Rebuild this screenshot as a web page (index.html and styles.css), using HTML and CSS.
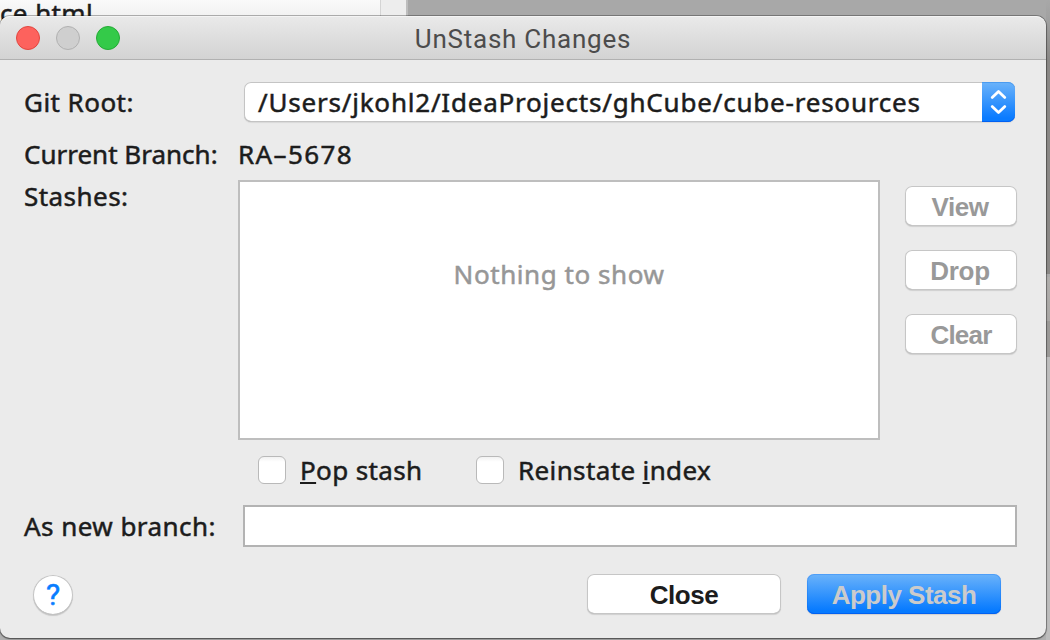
FILE: index.html
```html
<!DOCTYPE html>
<html lang="en">
<head>
<meta charset="utf-8">
<title>UnStash Changes</title>
<link rel="stylesheet" href="styles.css">
</head>
<body>
<div class="backdrop">
  <div class="editor-tab"><span class="file-name">ce.html</span></div>
  <div class="editor-gutter"></div>
  <div class="desktop"></div>
  <div class="side-strip"></div>
</div>
<main class="dialog">
  <header class="titlebar">
    <div class="lights"><i class="light red"></i><i class="light gray"></i><i class="light green"></i></div>
    <h1 class="title">UnStash Changes</h1>
  </header>
  <section class="content">
    <div class="row root-row">
      <label class="label">Git Root:</label>
      <div class="combo">
        <span class="combo-text">/Users/jkohl2/IdeaProjects/ghCube/cube-resources</span>
        <span class="combo-button">
          <svg width="33" height="40" viewBox="0 0 33 40" fill="none" stroke="#fff" stroke-width="2.8" stroke-linecap="round" stroke-linejoin="round"><path d="M10.2 15.4 16.5 9.4l6.3 6M10.2 24.6l6.3 6 6.3-6"/></svg>
        </span>
      </div>
    </div>
    <div class="row branch-row">
      <span class="label current">Current Branch:</span>
      <span class="branch">RA–5678</span>
    </div>
    <div class="row stash-row">
      <span class="label stashes">Stashes:</span>
      <div class="stash-list">Nothing to show</div>
      <div class="actions">
        <button class="button disabled view">View</button>
        <button class="button disabled drop">Drop</button>
        <button class="button disabled clear">Clear</button>
      </div>
    </div>
    <div class="row check-row">
      <label class="check pop"><span class="box"></span><span><u>P</u>op stash</span></label>
      <label class="check"><span class="box"></span><span>Reinstate <u>i</u>ndex</span></label>
    </div>
    <div class="row new-row">
      <label class="label">As new branch:</label>
      <div class="field"></div>
    </div>
    <footer class="row footer">
      <button class="help">?</button>
      <button class="button wide close">Close</button>
      <button class="button wide primary">Apply Stash</button>
    </footer>
  </section>
</main>
</body>
</html>
```
FILE: styles.css
```css
* { box-sizing: border-box; }
body {
  margin: 0;
  width: 1050px;
  height: 640px;
  overflow: hidden;
  position: relative;
  background: #a9a9a9;
  color: #1c1c1c;
  font: 26px/34px "Noto Sans", sans-serif;
  white-space: nowrap;
}
.backdrop {
  position: absolute;
  inset: 0;
  display: flex;
  background: #b0b0b0;
}
.editor-tab {
  width: 380px;
  height: 40px;
  background: linear-gradient(#fafafa, #f2f2f2 16px);
}
.file-name { display: block; margin-top: -4px; letter-spacing: 0.35px; -webkit-text-stroke: 0.5px; }
.editor-gutter {
  width: 28px;
  height: 40px;
  background: #ededed;
  border-left: 1px solid #d4d4d4;
  border-right: 2px solid #bdbdbd;
}
.desktop { flex: 1; height: 40px; background: #a8a8a8; }
.side-strip {
  width: 4px;
  background: linear-gradient(#a8a8a8 0, #a0a0a0 20px, #8a8886 60px, #8a8886 274px, #aaa 274px, #aaa 277px, #b0aeac 277px, #a9a7a5 321px, #9b9997 321px, #9b9997 357px, #bdbdbd 357px);
}
.dialog {
  position: relative;
  margin-top: 16px;
  width: 1046px;
  height: 622px;
  border-radius: 10px;
  background: #ebebeb;
  box-shadow: 0 0 0 1px rgba(0, 0, 0, 0.28), 0 1px 2px rgba(0, 0, 0, 0.4);
}
.titlebar {
  height: 44px;
  display: grid;
  grid-template-columns: 130px 1fr 130px;
  align-items: center;
  border-radius: 10px 10px 0 0;
  border-top: 1px solid #f4f4f4;
  border-bottom: 1px solid #b1b1b1;
  background: linear-gradient(#e9e9e9, #d3d3d3);
}
.lights { display: flex; gap: 16px; padding-left: 16px; }
.light { width: 24px; height: 24px; border-radius: 50%; border: 1px solid; }
.red { background: #fd625d; border-color: #e2463f; }
.gray { background: #cfcfcf; border-color: #b1b1b1; }
.green { background: #34ca49; border-color: #24ab35; }
.title {
  margin: 1px 0 0;
  text-align: center;
  font: 26px/34px Roboto, sans-serif;
  letter-spacing: 0.75px;
  color: #4c4c4c;
}
.row { display: flex; }
.label { width: 214px; flex: none; letter-spacing: 0.45px; }
.content { padding: 22px 29px 0 24px; -webkit-text-stroke: 0.5px; }
.root-row { height: 40px; align-items: center; }
.root-row .label { width: 220px; }
.combo {
  width: 771px;
  height: 40px;
  display: flex;
  align-items: center;
  justify-content: space-between;
  padding-left: 14px;
  border-radius: 7px;
  background: #fff;
  box-shadow: inset 0 0 0 1px #c4c4c4, inset 0 -1px 0 #a9a9a9, 0 1px 1px rgba(0, 0, 0, 0.08);
}
.combo-text { letter-spacing: 0.79px; }
.combo-button {
  width: 33px;
  height: 40px;
  border-radius: 0 7px 7px 0;
  background: linear-gradient(#6bb3fa, #0a7bff 90%);
  box-shadow: inset 0 1px 0 #4a9bf0, inset 0 -1px 0 #0261f2;
}
.combo-button svg { display: block; }
.branch-row { margin-top: 12px; height: 40px; align-items: center; }
.label.current { letter-spacing: 0; }
.branch { letter-spacing: 1.4px; }
.stash-row { margin-top: 6px; height: 260px; }
.stashes { margin-top: -1px; }
.stash-list {
  width: 642px;
  height: 260px;
  padding-top: 75px;
  text-align: center;
  letter-spacing: 0.55px;
  border: 2px solid #bebebe;
  background: #fff;
  color: #979797;
}
.actions { margin: 6px 0 0 25px; display: flex; flex-direction: column; gap: 24px; }
.button {
  width: 112px;
  height: 40px;
  padding: 2px 0 0;
  border: 0;
  border-radius: 7px;
  background: #fff;
  box-shadow: inset 0 0 0 1px #c6c6c6, inset 0 -1px 0 #ababab, 0 1px 1px rgba(0, 0, 0, 0.12);
  font: bold 26px/34px "Liberation Sans", sans-serif;
  color: #1c1c1c;
  -webkit-text-stroke: 0;
}
.disabled { color: #999; }
.view { letter-spacing: -0.4px; padding-right: 2px; }
.drop { letter-spacing: -0.3px; padding-right: 2px; }
.clear { letter-spacing: -0.8px; }
.close { letter-spacing: -0.5px; }
.check-row { margin-top: 16px; padding-left: 234px; height: 28px; align-items: center; }
.check { display: flex; align-items: center; gap: 14px; letter-spacing: 0.37px; }
.pop { width: 218px; }
.box {
  width: 28px;
  height: 28px;
  border: 1px solid #b9b9b9;
  border-radius: 6px;
  background: linear-gradient(#f2f2f2, #fff 5px);
}
u { text-decoration: underline; text-decoration-thickness: 2px; text-underline-offset: 2px; text-decoration-skip-ink: none; }
.new-row { margin-top: 21px; height: 42px; align-items: center; }
.new-row .label { width: 219px; }
.field { width: 774px; height: 42px; border: 2px solid #b3b3b3; background: #fff; }
.footer { margin-top: 27px; padding-left: 9px; }
.help {
  width: 40px;
  height: 40px;
  margin: 1px 514px 0 0;
  padding: 0;
  border: 0;
  border-radius: 50%;
  background: #fff;
  box-shadow: inset 0 0 0 1px #c4c4c4, inset 0 -1px 0 #aaa, 0 1px 1px rgba(0, 0, 0, 0.15);
  font: 30px/40px Roboto, sans-serif;
  color: #087dff;
}
.wide { width: 194px; }
.primary {
  margin-left: 26px;
  letter-spacing: -0.5px;
  color: #cbcbcb;
  background: linear-gradient(#6bb3fa, #067aff 92%);
  box-shadow: inset 0 0 0 1px rgba(0, 98, 240, 0.25), inset 0 -1px 0 #0261f2, 0 1px 1px rgba(0, 0, 0, 0.12);
}
```
